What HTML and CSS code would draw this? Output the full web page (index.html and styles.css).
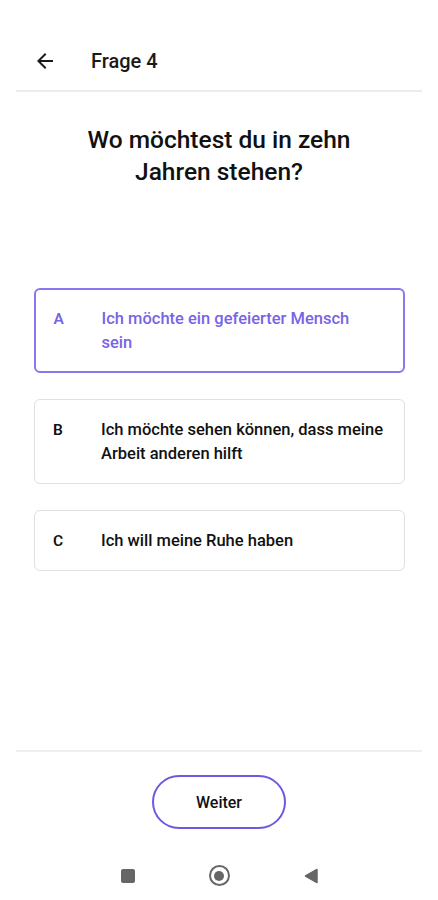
FILE: index.html
```html
<!DOCTYPE html>
<html lang="de">
<head>
<meta charset="utf-8">
<title>Frage 4</title>
<link rel="stylesheet" href="styles.css">
</head>
<body>
<div class="screen">
  <header class="topbar">
    <button class="back" aria-label="Zurück">
      <svg width="24" height="24" viewBox="0 0 24 24"><path d="M20 11H7.83l5.59-5.59L12 4l-8 8 8 8 1.41-1.41L7.83 13H20v-2z" fill="#1a1a1a"/></svg>
    </button>
    <span class="topbar-title">Frage 4</span>
  </header>
  <main class="content">
    <h1 class="question">Wo möchtest du in zehn<br>Jahren stehen?</h1>
    <div class="options">
      <div class="option selected"><span class="letter">A</span><span class="text">Ich möchte ein gefeierter Mensch<br>sein</span></div>
      <div class="option"><span class="letter">B</span><span class="text">Ich möchte sehen können, dass meine Arbeit anderen hilft</span></div>
      <div class="option"><span class="letter">C</span><span class="text">Ich will meine Ruhe haben</span></div>
    </div>
  </main>
  <footer class="footer">
    <button class="next">Weiter</button>
    <nav class="navbar">
      <span class="nav-square"></span>
      <span class="nav-home"><span class="nav-dot"></span></span>
      <svg class="nav-back" width="14" height="16" viewBox="0 0 14 16"><path d="M13 1.5v13L1.5 8z" fill="#666" stroke="#666" stroke-width="1.5" stroke-linejoin="round"/></svg>
    </nav>
  </footer>
</div>
</body>
</html>
```
FILE: styles.css
```css
* { box-sizing: border-box; }
html, body { margin: 0; padding: 0; background: #fff; }
body { font-family: Roboto, "Noto Sans", "Liberation Sans", sans-serif; color: #111; }
.screen { width: 438px; height: 900px; display: flex; flex-direction: column; }
.topbar {
  margin: 0 16px;
  padding-top: 32px;
  height: 92px;
  border-bottom: 2px solid #ececec;
  display: flex;
  align-items: center;
}
.back {
  border: none; background: none; padding: 0; margin-left: 17px;
  width: 24px; height: 24px; display: flex; align-items: center; justify-content: center;
}
.topbar-title { margin-left: 34px; font-size: 20px; font-weight: 500; color: #1a1a1a; }
.content { flex: 1; display: flex; flex-direction: column; }
.question {
  margin: 32px 0 0; text-align: center; font-size: 24.5px; line-height: 32px; font-weight: 500; color: #111;
}
.options { margin: 100px 33px 0 34px; display: flex; flex-direction: column; gap: 26px; }
.option {
  border: 1.5px solid #e0e0e0; border-radius: 6px; padding: 17.5px 10px 17.5px 18px;
  display: flex; font-size: 16.5px; line-height: 24px; font-weight: 500; color: #111;
}
.option.selected { border: 2px solid #8877ee; color: #7764e6; padding: 16.5px 9.5px 16.5px 17.5px; }
.letter { width: 48px; flex: none; font-weight: 600; font-size: 15.5px; }
.text { flex: 1; }
.footer { border-top: 2px solid #eeeeee; margin: 0 16px; display: flex; flex-direction: column; align-items: center; padding-top: 23px; }
.next {
  width: 134px; height: 54px; border: 2px solid #6b5ae2; border-radius: 27px; background: #fff;
  font-family: inherit; font-size: 16px; font-weight: 500; color: #111;
}
.navbar { height: 71px; width: 100%; display: flex; align-items: center; justify-content: center; padding-top: 22px; }
.nav-square { width: 14px; height: 14px; background: #666; border-radius: 2px; margin-right: 74px; }
.nav-home { width: 21px; height: 21px; border: 2.5px solid #666; border-radius: 50%; display: flex; align-items: center; justify-content: center; }
.nav-dot { width: 10px; height: 10px; border-radius: 50%; background: #666; }
.nav-back { margin-left: 74px; }
```
